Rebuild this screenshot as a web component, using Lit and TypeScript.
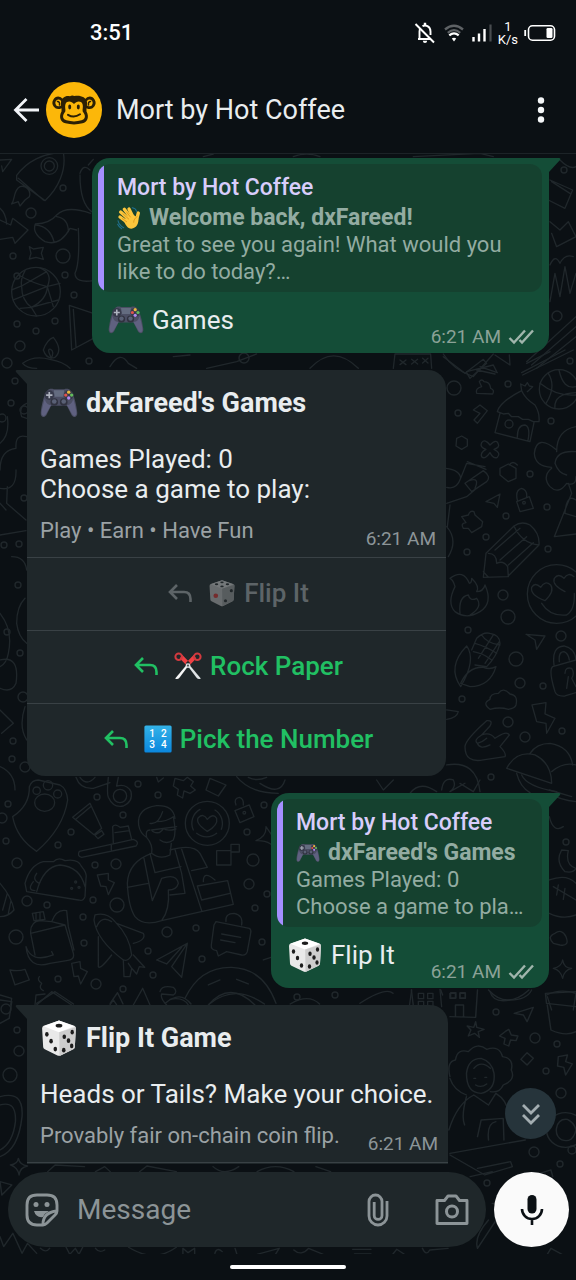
import { LitElement, html, svg, css } from "lit";
import { customElement, property } from "lit/decorators.js";

/* ---------- emoji ---------- */

const gamepad = html`<svg class="emoji" viewBox="0 0 36 36" aria-label="gamepad" role="img">
  <path d="M7 6.500 C8 4.500 11 4.200 13 5 H23 C25 4.200 28 4.500 29 6.500 C32 9 34.500 20 35.300 27 C35.800 31.500 32 32.500 30 29.500 L25.500 20.500 H10.500 L6 29.500 C4 32.500 .2 31.500 .7 27 C1.500 20 4 9 7 6.500Z" fill="#4b4e63"/>
  <path d="M4.500 14 C3 19 1.500 25 1.500 28 C2 31 4.500 31 6 28 L10.500 20 C7 20 5 17 4.500 14Z M31.500 14 C33 19 34.500 25 34.500 28 C34 31 31.500 31 30 28 L25.500 20 C29 20 31 17 31.500 14Z" fill="#5f6180"/>
  <path d="M13 6 H23 L22 12 H14Z" fill="#646c80"/>
  <circle cx="8.800" cy="10.500" r="4.600" fill="#373a4b"/><circle cx="27.200" cy="10.500" r="4.600" fill="#373a4b"/>
  <circle cx="13.500" cy="17" r="3.600" fill="#30323f"/><circle cx="22.500" cy="17" r="3.600" fill="#30323f"/>
  <circle cx="13.500" cy="16.600" r="2.200" fill="#596075"/><circle cx="22.500" cy="16.600" r="2.200" fill="#596075"/>
  <path d="M8.800 7.500 v6 M5.800 10.500 h6" stroke="#aeb3bf" stroke-width="1.600"/>
  <circle cx="27.200" cy="7.700" r="1.600" fill="#e9b93e"/><circle cx="24.400" cy="10.500" r="1.600" fill="#e0524d"/>
  <circle cx="30" cy="10.500" r="1.600" fill="#62bd5c"/><circle cx="27.200" cy="13.300" r="1.600" fill="#b18af0"/>
</svg>`;

const die = (dim = false) => html`<svg class="emoji" viewBox="0 0 36 36" aria-label="die" role="img">
  <path d="M18 1.500 L32.500 6.500 Q34 7.200 34 9 L33 26.500 Q33 28 31.500 28.700 L19.500 34.600 Q18 35.200 16.500 34.600 L4.500 28.700 Q3 28 3 26.500 L2 9 Q2 7.200 3.500 6.500Z" fill="${dim ? "#686c6e" : "#e9e9e9"}"/>
  <path d="M3.500 6.800 L18 1.500 L32.500 6.800 L18 12.500Z" fill="${dim ? "#74787a" : "#ffffff"}"/>
  <path d="M18.200 12.500 L34 7.500 L33 26.500 Q33 28 31.500 28.700 L18.500 35Z" fill="${dim ? "#575c5e" : "#cdcdcd"}"/>
  ${dim
    ? svg`<g fill="#22282b"><ellipse cx="11" cy="6.800" rx="2.200" ry="1.200"/><ellipse cx="18" cy="4.300" rx="2.200" ry="1.200"/><ellipse cx="25" cy="6.800" rx="2.200" ry="1.200"/><ellipse cx="18" cy="9.500" rx="2.200" ry="1.200"/><circle cx="30" cy="15" r="2"/><circle cx="22.500" cy="28" r="2"/></g><circle cx="10" cy="21.500" r="3" fill="#752c2d"/>`
    : svg`<g fill="#1c1c1c"><ellipse cx="18" cy="6.300" rx="3.200" ry="1.700"/><ellipse cx="6.500" cy="14.500" rx="1.700" ry="2.200"/><ellipse cx="10.500" cy="21" rx="1.700" ry="2.200"/><ellipse cx="14.500" cy="28.500" rx="1.700" ry="2.200"/><ellipse cx="23" cy="16.800" rx="1.700" ry="2.200"/><ellipse cx="30.500" cy="12.500" rx="1.600" ry="2.200"/><ellipse cx="27" cy="20.500" rx="1.700" ry="2.200"/><ellipse cx="22.500" cy="29.500" rx="1.700" ry="2.200"/><ellipse cx="30" cy="25.500" rx="1.600" ry="2.200"/></g>`}
</svg>`;

const wave = html`<svg class="emoji" viewBox="0 0 36 36" aria-label="waving hand" role="img">
  <g fill="none" stroke="#fcc63c" stroke-linecap="round" stroke-width="5"><path d="M19 21 L5.500 9"/><path d="M21 18 L11 5"/><path d="M24 17 L18 4.500"/><path d="M16 25 L4.500 16.500"/><path d="M29 22 L32 10.500"/></g>
  <path d="M10 21 L22 11 Q27 16 31.500 17 C34 25 29 34 21.500 34 C16 34 12 28 10 21Z" fill="#fcc63c"/>
  <path d="M8.500 11.500 L18 20 M14 8.500 L20.500 17 M7.500 18.500 L15 24 M31 15 C27 18 25 21 25 25" stroke="#d98e12" stroke-width="1.100" fill="none"/>
  <path d="M23 2.500 Q28 3 29.500 8 M1.500 22 Q3 29 10 32.500 M1 27.500 Q3 32 7 34" stroke="#20708f" stroke-width="1.600" fill="none" stroke-linecap="round"/>
</svg>`;

const scissors = html`<svg class="emoji" viewBox="0 0 36 36" aria-label="scissors" role="img">
  <path d="M15 14.500 L21 18 L34.500 34 Q31.500 36 29 33Z" fill="#dfe3e5"/>
  <path d="M21 14.500 L15 18 L1.500 34 Q4.500 36 7 33Z" fill="#f5f6f6"/>
  <path d="M7.500 8.500 L17.500 18.500 L21 14.500 L10.500 3.500Z M28.500 8.500 L18.500 18.500 L15 14.500 L25.500 3.500Z" fill="#ee4044"/>
  <circle cx="6" cy="6" r="4.200" fill="none" stroke="#d23a3f" stroke-width="2.600"/><circle cx="30" cy="6" r="4.200" fill="none" stroke="#d23a3f" stroke-width="2.600"/>
  <circle cx="18" cy="17.500" r="3" fill="#dfe3e5"/><circle cx="18" cy="17.500" r="1.400" fill="#50585c"/>
</svg>`;

const numbers = html`<svg class="emoji" viewBox="0 0 36 36" aria-label="input numbers" role="img">
  <defs><linearGradient id="tile" x1="0" y1="0" x2="0" y2="1"><stop offset="0" stop-color="#33b3e8"/><stop offset="1" stop-color="#0a86dd"/></linearGradient></defs>
  <rect x=".5" y=".5" width="35" height="35" rx="2" fill="url(#tile)"/>
  <g fill="#fff" font-family="Roboto, sans-serif" font-weight="500" font-size="13" text-anchor="middle"><text x="10.500" y="15.500">1</text><text x="25.500" y="15.500">2</text><text x="10.500" y="29.500">3</text><text x="25.500" y="29.500">4</text></g>
</svg>`;

/* ---------- interface icons ---------- */

const ticks = html`<svg class="ticks" viewBox="0 0 26 16" aria-label="delivered" role="img">
  <path d="M1.500 9 L6 13.500 L17 1.500 M11.500 11 L14 13.500 L25 1.500" fill="none" stroke="currentColor" stroke-width="2.400"/>
</svg>`;

const replyArrow = html`<svg class="reply" viewBox="0 0 24 20" aria-hidden="true">
  <path d="M9 2 L2 9 L9 16 M2 9 H16 Q22.500 9 22.500 16 V19" fill="none" stroke="currentColor" stroke-width="2.600"/>
</svg>`;

/* ---------- wallpaper doodles ---------- */

const dots: [number, number, number][] = [
  [17, 276, 3], [13, 256, 3], [31, 213, 5], [63, 188, 3], [63, 256, 7], [65, 275, 3], [74, 295, 3], [17, 324, 3], [36, 331, 3],
  [55, 321, 3], [20, 346, 5], [7, 363, 5], [89, 361, 3], [15, 381, 3], [11, 403, 3], [2, 418, 4], [24, 410, 4], [19, 544, 3],
  [4, 545, 3], [24, 498, 3], [18, 585, 3], [7, 632, 3], [20, 653, 3], [23, 697, 5], [13, 741, 3], [12, 759, 3], [25, 767, 5],
  [8, 804, 3], [2, 818, 5], [6, 841, 3], [17, 863, 5], [97, 797, 3], [158, 795, 3], [138, 784, 3], [123, 815, 3], [71, 832, 3],
  [58, 845, 3], [95, 865, 3], [116, 864, 5], [253, 860, 6], [249, 884, 5], [264, 805, 3], [247, 832, 3], [267, 894, 3],
  [255, 908, 3], [27, 901, 5], [47, 905, 3], [93, 900, 3], [117, 905, 7], [83, 917, 3], [16, 937, 7], [84, 943, 3],
  [167, 932, 5], [196, 928, 3], [148, 951, 3], [202, 959, 3], [153, 975, 3], [58, 979, 3], [96, 984, 5], [123, 989, 3],
  [262, 942, 3], [454, 388, 7], [508, 384, 3], [458, 413, 3], [551, 421, 3], [570, 361, 3], [530, 474, 3], [506, 516, 3],
  [547, 507, 3], [486, 537, 3], [467, 552, 3], [548, 549, 3], [503, 595, 5], [508, 617, 7], [468, 630, 3], [561, 636, 5],
  [516, 659, 7], [520, 683, 5], [543, 686, 3], [462, 699, 3], [508, 722, 5], [525, 737, 5], [562, 731, 3], [491, 777, 3],
  [564, 170, 3], [557, 316, 5], [244, 358, 5], [566, 842, 3], [496, 1012, 3], [535, 1038, 5],
  [557, 1044, 3], [546, 1071, 3], [561, 1093, 5], [534, 1152, 5], [560, 1164, 3], [487, 1183, 3], [17, 1030, 3],
  [19, 1051, 5], [10, 1075, 7], [6, 1009, 5], [297, 997, 3], [335, 995, 3], [530, 1182, 5], [572, 1150, 4],
];

const wallpaper = svg`
  <g fill="none" stroke="#20272b" stroke-width="1.400" stroke-linejoin="round" stroke-linecap="round">
    ${dots.map(([x, y, r]) => svg`<circle cx=${x} cy=${y} r=${r}/>`)}

    <g transform="translate(0 150) scale(.3333)" stroke-width="4">
      <path d="M50 76 C80 35 130 8 190 8 C200 60 175 115 135 152 L50 90Z M55 85 L130 150 M60 110 C40 120 45 150 35 162 L55 155 L60 168 L75 150 L88 140 C95 120 75 105 60 110Z"/>
      <circle cx="148" cy="48" r="25"/><circle cx="148" cy="48" r="15"/>
      <path d="M0 30 L35 28 L8 65 L5 48 M0 210 L32 225 L38 205 L84 240 L45 280 L38 262 L0 268 M0 175 Q18 190 20 222"/>
      <path d="M106 222 Q150 220 170 195 Q200 165 272 190 M106 222 Q95 250 135 275 Q180 290 210 235 L230 240 M108 225 Q150 230 162 275 M170 200 Q205 205 205 245"/>
      <path d="M88 290 L100 297 L130 292 L124 310 L130 328 L108 322 L88 327 L93 310Z"/>
      <circle cx="108" cy="425" r="73"/><path d="M55 375 Q100 400 142 410 Q160 370 120 354 M75 362 Q60 390 65 410 Q65 450 94 472 Q140 450 142 410 M35 420 L65 408 L140 365 M40 450 L140 410 L180 400 M94 472 L175 450 M60 475 L94 472 L110 498 M142 410 L160 470"/>
      <path d="M208 466 L280 490 M208 466 L215 600 L290 560 M220 478 L228 590 M235 235 Q240 340 225 370 Q225 400 280 392 M240 75 Q240 160 275 185 M240 70 Q250 40 270 60 M265 45 L280 28"/>
      <path d="M130 600 Q140 570 160 562 Q190 600 165 622 Q140 630 130 600Z M152 620 Q140 595 152 598 Q165 605 152 628 M68 640 Q100 615 150 628 Q190 635 210 655 M68 640 Q80 655 110 655"/>
    </g>

    <g transform="translate(0 360) scale(.3333)" stroke-width="4">
      <path d="M0 250 Q30 225 22 170 M80 230 Q45 220 48 265 Q0 270 0 330 M0 385 Q50 395 48 330 M22 380 L20 430 L78 480 M0 430 L18 450 M0 525 L78 512 M80 130 Q55 140 65 170 L80 175"/>
      <path d="M0 760 Q40 810 25 880 Q20 910 0 920 M75 715 Q50 740 50 790 Q55 830 80 850 M35 590 Q75 590 80 630 M0 900 Q60 885 48 970 Q35 1000 0 985 M0 1050 L40 1090 L5 1120 M75 1040 Q55 1100 80 1140 M0 1220 Q45 1240 45 1290"/>
    </g>

    <g transform="translate(0 750) scale(.3333)" stroke-width="4">
      <path d="M38 200 Q90 165 88 110 Q95 90 115 90 L180 105 Q200 115 203 150 Q190 235 110 304 Q50 265 38 200Z"/>
      <ellipse cx="134" cy="158" rx="30" ry="26"/><circle cx="110" cy="122" r="11"/><circle cx="144" cy="106" r="14"/><circle cx="173" cy="132" r="12"/>
      <path d="M218 202 L270 160 L305 235 L282 254Z M228 207 L272 170 M285 256 L305 242 L312 253 L294 266Z"/>
      <path d="M238 304 L400 268 Q420 275 408 288 L245 322 Q230 318 238 304Z M340 280 L338 230 Q345 220 360 232 L385 228 L395 268 M345 248 L388 242 M334 285 V300"/>
      <path d="M228 82 Q240 118 280 115 L330 98 M240 82 Q260 110 285 82 M325 82 Q320 130 325 142 Q340 175 370 168 Q400 155 393 125 Q380 100 350 108 L355 82"/><circle cx="360" cy="138" r="20"/>
      <path d="M525 85 L550 92 L562 82 L580 95 L572 108 L586 120 L570 130 L552 123 L548 144 L532 135 L535 118 L520 108Z M630 85 L678 105 L655 138 L618 120Z M470 82 L475 96 L490 84 M710 80 Q750 130 835 130 M745 82 Q770 95 800 82"/>
      <circle cx="622" cy="220" r="66"/><path d="M622 244 Q585 220 595 203 Q610 188 622 208 Q640 188 650 205 Q655 225 622 244Z M580 240 A48 48 0 0 1 600 178 M645 180 A48 48 0 0 1 664 238 M650 250 A48 48 0 0 1 590 250"/>
      <path d="M705 182 L748 165 L762 200 L720 218Z M708 165 Q700 145 718 142 Q732 145 730 165"/><circle cx="733" cy="188" r="4"/>
      <path d="M830 310 Q820 270 768 272 Q800 260 798 230 L815 255 M650 302 H693 V345 H650Z M693 283 H718 V306 H693Z"/>
      <path d="M525 205 Q520 165 470 167 Q410 175 416 225 Q420 250 440 262 M440 262 Q435 240 450 240 M450 220 Q475 225 488 185 M470 215 Q500 215 520 200 Q530 250 520 270 Q500 285 480 270 M455 240 L530 230 M455 240 Q460 250 478 248 Q490 240 490 235 Q500 245 528 237 M440 262 Q460 285 455 310 Q480 330 510 315 L514 280"/>
      <path d="M455 310 Q385 335 382 400 Q385 470 405 500 Q430 530 485 512 L700 463 L683 392 L592 408 M510 300 Q580 280 600 310 L622 352 L575 362 M432 325 L457 452 Q480 400 485 385 M382 412 L445 400 M450 310 L465 368 L490 362 M525 298 L545 370 L555 430 L510 435 M545 298 L605 482 M490 362 L543 350 M485 385 Q530 370 535 400 Q530 420 505 420 Q510 480 485 512 M592 408 L605 450 L690 430 M610 395 Q610 360 645 390"/>
      <path d="M75 400 Q90 345 130 335 L160 335 Q175 320 195 332 Q235 325 245 350 Q262 370 258 385 L255 440 Q250 455 235 450 L80 425Z M110 425 Q130 350 180 345 Q240 350 255 410 M100 395 Q80 420 105 422 M110 370 Q95 390 118 400"/><circle cx="227" cy="396" r="3"/><circle cx="215" cy="415" r="3"/><circle cx="237" cy="412" r="3"/>
      <path d="M292 375 L325 370 L325 390 L343 398 L325 434 L318 410 L302 408Z M215 640 L240 635 L242 655 L262 665 L242 702 L235 678 L222 680Z M30 660 Q55 665 75 658 L88 690 L45 705Z M118 680 Q110 690 125 700 Q115 715 130 722"/>
      <path d="M92 550 Q90 515 120 512 L155 515 L195 525 L220 610 Q225 630 200 632 L150 640 Q85 660 78 590 Q95 640 160 615 L155 605 M92 550 L195 525 M92 550 L105 615 M97 490 L130 485 L135 508 L102 512Z M108 488 V508 M120 486 V508 M155 515 Q170 475 200 482 L205 530 L222 600 M0 400 Q35 440 42 480 Q25 500 0 500 M8 480 L22 430 M25 490 L33 452"/>
      <path d="M285 495 Q320 485 345 515 Q390 560 395 615 Q385 635 370 630 Q290 570 282 510Z M290 530 Q305 495 335 515 M350 520 L430 550 Q440 570 400 580 M295 560 V650 Q300 660 335 615 M370 630 L372 680 L390 680 L395 655 L410 672 L418 650 L434 652 L400 615 M385 640 L395 655"/>
      <path d="M470 630 L562 580 L545 682 L515 650 L562 580 M470 630 L500 642 L545 592"/>
      <path d="M648 515 L748 535 Q755 540 752 550 L742 605 Q738 617 725 615 L680 605 L655 618 L650 602 Q632 600 634 585 L642 525Z M665 552 L722 562 M662 570 L705 578 M678 515 Q675 490 702 490 Q730 495 725 525"/>
      <path d="M555 745 Q600 650 695 652 Q790 655 828 760 M625 765 Q690 690 765 765 M625 705 L660 690 M710 688 L745 702 M565 765 Q550 740 510 748 M480 725 Q485 705 520 712 Q535 725 520 735 L485 732 Q480 745 500 765 M105 765 L108 735 L135 732 M110 765 L155 725 L215 765 M400 765 L428 715 L450 765 M330 765 L340 750 L350 765 M0 735 L35 745 L32 765 M790 630 L820 620"/>
    </g>

    <g transform="translate(440 350) scale(.3333)" stroke-width="4">
      <path d="M10 20 L75 70 L130 28 L140 40 L90 85 L80 68 M110 60 L165 72 M120 50 L172 68 M165 15 L210 45 L208 15 M245 68 L375 0 M260 40 L330 5 M248 75 L400 0"/>
      <circle cx="357" cy="118" r="59"/><path d="M300 100 Q350 140 408 135 M325 70 Q350 110 318 160 M357 60 Q370 120 408 110 M345 176 Q340 130 408 128"/>
      <path d="M110 130 Q105 115 125 110 L118 95 Q125 85 132 95 Q150 95 152 115 Q165 120 158 132Z M100 180 L120 165 L142 182 L112 220 L102 210 L120 190Z"/>
      <path d="M172 185 Q180 155 245 122 Q255 145 285 165 Q300 190 297 215 L280 215 L265 208 L248 208 L235 200 L215 200 L205 190 L190 192Z M180 190 L165 248 L270 275 L282 218 M245 122 L242 102 L255 108 L262 98 L268 108 L278 110 L262 125 M232 262 Q232 225 255 225 Q272 230 264 272"/><circle cx="207" cy="222" r="12"/>
      <path d="M50 265 L65 258 L82 268 L82 288 L65 298 L48 288Z M125 278 Q135 265 150 285 Q170 265 175 282 Q180 292 162 298 Q185 310 172 322 Q160 328 150 308 Q135 330 125 320 Q120 308 138 298 Q118 292 125 278Z"/>
      <path d="M180 355 L205 342 L228 355 L228 385 L205 395 L180 375Z M208 345 Q218 330 232 345 M230 455 L268 440 L280 475 L240 485Z M232 450 Q225 420 245 415 Q262 420 260 440 M138 455 L180 432 L172 472 L162 460Z"/><circle cx="252" cy="458" r="4"/>
      <path d="M350 305 Q350 240 408 230 M350 300 Q290 250 283 310 Q285 350 335 352 M335 355 Q305 380 330 410 Q355 435 380 400 Q408 410 408 380 M345 340 Q350 300 408 305 M345 340 Q355 370 380 375 M385 400 L395 430 L343 560 L408 552 M375 490 Q380 430 408 450 M375 490 L408 500"/>
      <path d="M18 355 Q60 360 62 385 Q50 420 20 412 M62 385 L80 340 L135 350 M82 335 L138 358 M75 400 L130 362 Q155 380 140 395 L95 425Z M88 392 Q120 380 105 415 M20 460 L80 440 L110 415 M30 465 L22 530 M20 530 Q55 570 25 620"/>
      <path d="M65 500 L85 495 Q90 480 102 485 L105 495 L128 515 L125 530 L95 548 L85 535 L70 535 Q60 520 78 518Z"/>
      <path d="M130 682 L138 610 L222 528 Q245 512 270 525 Q300 550 297 585 L203 680Z M145 610 Q170 610 170 640 Q190 630 203 650 L205 680 M222 528 Q245 580 297 585 M165 600 L240 535 M180 630 L260 560 M130 665 L145 682 M205 645 L280 578"/>
      <path d="M30 685 Q70 655 88 700 Q95 700 95 685 Q120 710 110 725 Q130 725 135 705 Q160 760 120 785 Q80 810 45 785 Q20 760 45 710 Q40 690 30 685Z M60 790 Q55 740 85 735 Q90 755 110 745 Q130 770 90 795"/>
      <circle cx="350" cy="732" r="88"/><path d="M315 752 Q270 735 275 712 Q285 695 302 712 Q315 690 332 705 Q345 725 315 752Z M375 725 Q335 705 343 685 Q355 668 372 685 Q385 665 402 680 M305 760 Q330 800 380 795 Q405 780 403 730"/>
      <path d="M62 1010 Q20 950 80 888 Q110 930 62 1010Z M62 1000 Q85 950 130 952 Q150 960 168 950 Q150 1010 90 1010Z M95 900 L110 865 Q130 845 150 850 Q180 855 180 880 Q170 920 140 950 L105 945 M105 880 Q140 890 170 910 M100 905 Q130 910 155 930 M125 855 Q140 880 180 885 M115 925 L160 855 M135 940 L178 875"/>
      <path d="M258 853 L315 858 L290 898 L285 870Z M338 950 L408 930 M338 950 Q325 960 345 1025 Q350 1040 375 1038 L408 1028 M342 945 Q335 890 372 888 Q405 895 408 930 M358 935 Q355 905 372 905 Q385 910 388 930 M375 970 Q375 950 395 955 Q405 970 395 985 L408 1010 M380 1015 L385 980"/>
      <path d="M150 1078 Q125 1060 150 1048 Q150 1030 175 1030 Q190 1010 210 1032 Q235 1035 228 1065 Q225 1075 205 1078 Q180 1070 150 1078Z M276 1065 L318 1058 L315 1092 L345 1105 L320 1150 L318 1120 L290 1115Z M20 1080 L55 1085 Q50 1105 20 1108"/>
      <path d="M75 1190 Q75 1170 140 1112 Q160 1110 150 1128 L125 1155 Q150 1145 165 1165 Q200 1140 208 1155 L180 1190 Q200 1210 195 1220 L130 1230 Q75 1240 75 1190Z M125 1155 Q100 1170 112 1180 Q130 1175 140 1165 M112 1180 Q120 1200 150 1185 M20 1245 Q110 1230 120 1325 M5 1320 Q10 1280 40 1290 Q50 1310 30 1325 L75 1300"/>
      <path d="M200 1255 Q230 1200 285 1215 Q335 1240 335 1300 Z M270 1210 Q290 1180 330 1180 Q390 1190 398 1245 M335 1265 Q370 1235 408 1245 M230 1270 Q240 1310 270 1328 M245 1275 Q260 1310 350 1325"/>
    </g>

    <g transform="translate(80 150) scale(.3333)" stroke-width="4">
      <path d="M1410 90 L1478 120 L1455 175 L1405 150 M1415 95 L1470 130 M1440 30 Q1470 60 1488 50 M1410 215 L1440 240 L1465 215 L1488 260 L1430 290 L1415 250 M1410 345 Q1425 310 1440 340 Q1455 310 1480 320 M1410 455 L1425 370 L1440 440 L1455 350 L1470 430 L1488 370 M1340 635 L1488 500 M1355 645 L1488 530 M1370 655 L1488 560"/>
      <path d="M280 620 L330 615 M380 655 L470 635 L530 612 M690 655 Q760 580 835 655 M940 655 L945 612 H1052 L1055 655 M1090 612 Q1120 660 1180 680 L1240 612 M1160 665 L1240 645 L1250 665 M90 650 Q120 600 145 640 L170 655"/>
      <path d="M960 630 l18 14 m0 -14 l-18 14 M995 628 l18 14 m0 -14 l-18 14 M1028 625 l16 14 m0 -14 l-16 14 M370 20 L400 12 M640 20 Q680 5 720 20 M1000 20 L1200 10 L1240 20"/>
    </g>

    <g transform="translate(260 780) scale(.3333)" stroke-width="4">
      <path d="M868 30 L935 50 M870 40 Q900 60 948 65 M868 110 Q880 160 910 140 M905 210 Q885 245 915 275 Q940 280 948 265 Q915 255 925 212Z M868 300 Q920 280 948 310 M868 400 Q910 420 948 405 M880 320 L948 360 M895 315 L890 345 M915 325 L910 358 M880 490 Q860 470 885 460 Q905 445 918 470 Q930 500 900 495Z M908 540 Q912 565 935 565 Q912 570 908 595 Q902 570 880 565 Q905 560 908 540Z M860 645 Q900 625 948 640 L940 690 M862 650 L875 690"/>
      <path d="M455 630 L448 680 M540 628 L545 680 M475 640 h16 v16 h-16Z M503 640 h16 v16 h-16Z M475 664 h16 v16 h-16Z M503 664 h16 v16 h-16Z M572 638 h16 v16 h-16Z M600 638 h16 v16 h-16Z M690 635 Q700 670 750 660 Q800 660 815 630 M0 10 Q60 50 75 0 M350 0 L370 30 L400 0 M450 40 Q480 0 530 35 M600 10 L640 35 L660 0"/>
    </g>

    <g transform="translate(0 990) scale(.3673 .3333)" stroke-width="4">
      <path d="M1120 0 L1125 45 M1200 0 L1205 15 M1300 0 L1295 82 L1225 80 M1225 10 h15 v15 h-15Z M1252 10 h15 v15 h-15Z M1240 80 V45 H1262 V80 M1330 0 Q1380 60 1440 0 M1485 10 L1568 5 M1485 10 L1488 40 L1568 50 M1490 45 L1500 120 Q1540 140 1568 125 M1400 70 L1452 52 L1435 95 L1425 75Z"/>
      <path d="M1295 95 L1298 112 L1318 118 L1302 125 L1305 142 L1292 130 L1275 138 L1282 120 L1272 108 L1290 112Z M1375 125 L1385 118 L1392 135 L1410 138 L1405 152 L1390 150 L1385 168 L1372 162 L1375 145 L1360 138Z M1435 188 L1452 205 L1435 225 L1418 208Z M1520 200 L1545 195 L1540 215 L1558 222 L1540 255 L1535 232 L1518 228Z"/>
      <path d="M1225 260 Q1215 215 1240 210 Q1245 175 1275 185 Q1300 155 1325 178 Q1360 165 1368 200 Q1400 205 1392 240 Q1405 270 1370 285 Q1360 310 1335 305 M1270 250 Q1275 205 1310 205 Q1340 215 1345 250 Q1350 300 1310 310 Q1270 310 1270 250Z M1290 235 Q1310 210 1335 235 M1290 265 h5 M1320 262 h5 M1295 285 Q1310 295 1325 282 M1225 265 Q1235 300 1270 315"/>
      <path d="M1222 420 Q1245 340 1290 315 L1330 345 L1350 310 Q1380 330 1385 370 M1270 320 Q1255 380 1265 405 M1300 440 L1310 390 L1370 385 L1372 450 M1225 490 L1430 450 M1330 450 Q1325 400 1350 395 M1225 495 L1320 555 L1395 530 L1390 515 L1300 535 M1280 560 L1340 545"/>
      <circle cx="1540" cy="420" r="52"/><path d="M1515 415 Q1520 385 1545 388 Q1565 400 1568 420 Q1560 460 1530 450 Q1512 440 1515 415Z"/>
      <path d="M0 30 L32 35 L25 85 L0 100 M0 320 Q65 300 60 380 Q50 480 0 500 M0 345 Q45 330 42 395 Q35 460 0 480 M50 505 Q54 525 75 528 Q54 532 52 555 Q48 532 28 525 Q48 522 50 505Z M0 575 L32 585 L5 615Z"/>
      <path d="M100 40 L150 5 L200 42 M300 40 L320 8 L335 42 M450 40 Q490 0 520 42 M570 42 Q640 -20 720 42 M790 42 Q840 10 870 42 M980 40 Q1050 -10 1070 10 M130 545 L150 525 L230 530 M260 545 L285 530 L300 545 M380 545 L400 528 L480 545 M580 530 Q610 560 650 530 M700 545 Q750 515 800 545 M860 530 L900 545"/>
      <path d="M0 740 L10 770 L35 730 L60 790 L75 760 L100 790 M110 775 Q125 790 135 775 M180 772 L190 793 L205 775 L215 793 L225 772 M260 775 Q270 790 285 780 M350 772 Q420 820 480 772 M498 793 V775 L512 788 L530 775 V793 M585 790 Q590 770 605 785 M640 775 L645 793 M700 793 L760 775 L750 793 M800 780 Q820 800 840 775 L880 793 M960 778 H1010 M965 792 H1010 M1070 792 L1080 778 L1100 792 M1150 775 Q1160 800 1170 780 L1220 775 M1300 775 L1375 650 L1340 640 M1330 690 Q1290 740 1300 775 M1490 793 L1500 775 L1530 793 M1470 550 L1500 540 L1505 560"/>
    </g>
  </g>`;

/* ---------- message bubble ---------- */

@customElement("chat-bubble")
class ChatBubble extends LitElement {
  @property() side: "in" | "out" = "in";

  static styles = css`
    :host { display: flex; }
    .bubble { position: relative; box-sizing: border-box; min-width: 0; color: #e9edef; font-size: 26px; line-height: 30px; }
    .in { background: #1f272a; border-radius: 0 18px 18px 18px; min-width: min(419px, 100%); }
    .out { background: #144d37; border-radius: 18px 0 18px 18px; margin-left: auto; max-width: 457px; padding: 6px 7px 0 6px; }
    .tail { position: absolute; top: 0; width: 12px; height: 14px; }
    .in .tail { right: 100%; color: #1f272a; }
    .out .tail { left: 100%; color: #144d37; }
  `;

  render() {
    const out = this.side === "out";
    return html`<article class="bubble ${this.side}">
      <svg class="tail" viewBox="0 0 12 14" aria-hidden="true">
        <path d=${out ? "M0 0 H10 Q12 0 11 2 L0 14Z" : "M12 0 H2 Q0 0 1 2 L12 14Z"} fill="currentColor"/>
      </svg>
      <slot></slot>
    </article>`;
  }
}

@customElement("app-root")
class AppRoot extends LitElement {
  static styles = css`
    :host { display: flex; flex-direction: column; height: 100vh; overflow: hidden; background: #0b1014; color: #e9edef; font-family: Roboto, "Noto Sans", sans-serif; }
    * { box-sizing: border-box; }
    svg { display: block; flex: none; }
    button, input { margin: 0; padding: 0; border: 0; background: none; color: inherit; font: inherit; }
    p, h1, h2 { margin: 0; font: inherit; }

    .status { display: flex; align-items: center; justify-content: space-between; height: 66px; padding: 0 20px 0 90px; color: #fff; }
    .clock { font-size: 22px; line-height: 28px; font-weight: 500; }
    .indicators { display: flex; align-items: center; gap: 6px; }
    .speed { display: flex; flex-direction: column; align-items: center; font-size: 13px; line-height: 13px; }

    .header { display: flex; align-items: center; height: 88px; padding: 0 27px 0 13px; border-bottom: 1px solid #1c2327; }
    .avatar { margin-left: 6px; }
    .name { flex: 1; margin-left: 14px; font-size: 27px; line-height: 32px; }

    .chat { flex: 1; min-height: 0; display: grid; grid-template: minmax(0, 1fr) / minmax(0, 1fr); }
    .wallpaper, .content { grid-area: 1 / 1; width: 100%; height: 100%; min-height: 0; }
    .content { display: flex; flex-direction: column; z-index: 1; }
    .stream { position: relative; flex: 1; min-height: 0; overflow: hidden; display: flex; flex-direction: column; gap: 17px; padding: 4px 27px 0; }
    chat-bubble { flex: none; }

    .line { display: flex; align-items: center; gap: 8px; }
    .emoji { width: 36px; height: 36px; margin: -4px 0; }
    .quote { border-radius: 12px; background: linear-gradient(90deg, #a58fff 6px, #15412f 6px); padding: 8px 17px 7px 19px; color: #93aca2; font-size: 22px; line-height: 27px; }
    .quote .emoji { width: 24px; height: 24px; }
    .author { color: #d8cdfb; font-size: 23px; line-height: 32px; font-weight: 500; }
    .strong { font-size: 23px; font-weight: 700; }
    .said { display: flex; align-items: flex-end; justify-content: space-between; gap: 36px; padding: 13px 8px 4px 10px; }
    .said p { margin-bottom: 14px; }
    .time { display: flex; align-items: center; gap: 7px; color: #8c9598; font-size: 19px; line-height: 24px; white-space: nowrap; }
    .out-time { color: #8ba297; }
    .ticks { width: 26px; height: 16px; color: #a0b5ac; }

    .card { padding: 18px 10px 6px 13px; }
    .card h2 { font-size: 27px; font-weight: 700; margin-bottom: 26px; }
    .card .emoji { width: 38px; height: 38px; }
    .foot { display: flex; justify-content: space-between; align-items: flex-start; gap: 28px; margin-top: 14px; color: #9ba2a5; font-size: 22px; line-height: 26px; }
    .foot .time { margin-top: 9px; }
    .choice { display: flex; align-items: center; justify-content: center; gap: 8px; width: 100%; height: 73px; padding: 0 0 2px 4px; border-top: 1px solid #394145; color: #21c063; font-size: 26px; line-height: 30px; font-weight: 500; }
    .choice .emoji { width: 28px; height: 28px; margin-left: 8px; }
    .choice:disabled { color: #5d6467; }
    .reply { width: 24px; height: 20px; }
    .more { height: 40px; border-top: 1px solid #394145; }

    .jump { position: absolute; right: 20px; bottom: 25px; display: grid; place-items: center; width: 51px; height: 51px; border-radius: 50%; background: #26343b; color: #a3adb1; }

    .composer { display: flex; align-items: center; gap: 8px; padding: 8px 7px 7px 8px; }
    .pill { flex: 1; min-width: 0; display: flex; align-items: center; height: 75px; padding: 0 17px; border-radius: 38px; background: #1f272a; color: #8c9497; }
    .field { flex: 1; min-width: 0; margin-left: 18px; font-size: 28px; line-height: 34px; outline: none; color: #e9edef; }
    .field::placeholder { color: #8c9497; opacity: 1; }
    .camera { margin-left: 46px; }
    .mic { display: grid; place-items: center; width: 75px; height: 75px; border-radius: 50%; background: #fafafa; color: #0b1014; }
    .home { display: flex; justify-content: center; align-items: center; height: 26px; }
    .home span { width: 116px; height: 4px; border-radius: 2px; background: #fff; }
  `;

  private said(label: string, emoji: unknown) {
    return html`<div class="said"><p class="line">${emoji}<span>${label}</span></p><span class="time out-time">6:21 AM ${ticks}</span></div>`;
  }

  private choice(label: string, emoji: unknown, disabled = false) {
    return html`<button class="choice" ?disabled=${disabled}>${replyArrow}${emoji}<span>${label}</span></button>`;
  }

  private card(title: string, emoji: unknown, lines: string[], foot: string) {
    return html`<div class="card">
      <h2 class="line">${emoji}<span>${title}</span></h2>
      ${lines.map((line) => html`<p>${line}</p>`)}
      <div class="foot"><span>${foot}</span><span class="time">6:21 AM</span></div>
    </div>`;
  }

  render() {
    return html`
      <div class="status">
        <span class="clock">3:51</span>
        <div class="indicators">
          <svg width="22" height="22" viewBox="0 0 22 22" aria-label="silent" role="img">
            <path d="M1.500 2 L20 20.500" stroke="#fff" stroke-width="1.900"/>
            <path d="M4 17 H16 M5.500 16.500 V9.500 Q5.500 7.500 6.500 6.500 M8.500 4.200 Q11 2.800 13.500 4.200 Q16.500 5.800 16.500 9.500 V13" fill="none" stroke="#fff" stroke-width="1.900"/>
            <path d="M9.800 .8 h2.400 v3 h-2.400Z M8.800 18.800 h4.400 Q13 21 11 21 Q9 21 8.800 18.800Z" fill="#fff"/>
          </svg>
          <svg width="24" height="20" viewBox="0 0 24 20" aria-label="wifi" role="img">
            <path d="M3 6.500 Q12 -1 21 6.500 M5.800 9.800 Q12 4.500 18.200 9.800" fill="none" stroke="#5e6265" stroke-width="2.300"/>
            <path d="M7.300 12.300 Q12 8.500 16.700 12.300" fill="none" stroke="#fff" stroke-width="2.300"/><path d="M9.800 15.500 Q12 13.800 14.200 15.500 L12 18.500Z" fill="#fff"/>
          </svg>
          <svg width="20" height="18" viewBox="0 0 20 18" aria-label="signal" role="img">
            <path d="M1.500 13 V17.500 M7 9.500 V17.500 M12.500 5 V17.500" stroke="#fff" stroke-width="2.400"/><path d="M18.500 .5 V17.500" stroke="#484c4f" stroke-width="2.200"/>
          </svg>
          <span class="speed"><span>1</span><span>K/s</span></span>
          <svg width="32" height="18" viewBox="0 0 32 18" aria-label="battery" role="img">
            <path d="M1.200 6 V12" stroke="#fff" stroke-width="1.800"/><rect x="4.500" y="1.800" width="26" height="14.400" rx="4" fill="none" stroke="#fff" stroke-width="1.600"/><rect x="22.500" y="4" width="6" height="10" rx="1.200" fill="#fff"/>
          </svg>
        </div>
      </div>

      <header class="header">
        <button aria-label="Back"><svg width="27" height="26" viewBox="0 0 27 26"><path d="M13.500 2 L2.500 13 L13.500 24 M2.500 13 H26" fill="none" stroke="#f1f4f8" stroke-width="2.800"/></svg></button>
        <svg class="avatar" width="56" height="56" viewBox="0 0 56 56" aria-label="Mort" role="img">
          <circle cx="28" cy="28" r="28" fill="#fcb709"/>
          <path d="M15 25 C9.500 27.500 6.500 22 8.500 18.500 C10.500 15 14 15.500 16 18 M41 25 C46.500 27.500 49.500 22 47.500 18.500 C45.500 15 42 15.500 40 18" fill="none" stroke="#2b2005" stroke-width="2.800" stroke-linecap="round"/>
          <path d="M11.500 19.500 Q14 19.500 13.500 23 M44.500 19.500 Q42 19.500 42.500 23" fill="none" stroke="#2b2005" stroke-width="1.500" stroke-linecap="round"/>
          <path fill-rule="evenodd" fill="#2b2005" d="M15 20 C15.500 15.500 20 13 24 14.200 Q26 12.800 28.500 14 C34 12.800 40 15 41 20 C41.500 24 40 27 40.500 29.500 C43.500 35 41.500 40 36.500 41.300 Q28 43.500 19.500 41.300 C14.500 40 12.500 35 15.500 29.500 C16 27 14.500 24 15 20Z M19.500 22 C18.500 25 19.800 27 19.300 29.500 C15.500 34 17 37.500 20.500 38.300 Q28 40.500 35.500 38.300 C39 37.500 40.500 34 36.700 29.500 C36.200 27 37.500 25 36.500 22 C35 18.500 30.500 19 28 22 C25.500 19 21 18.500 19.500 22Z"/>
          <path d="M22 32.800 Q28 36.500 34 32.300" fill="none" stroke="#2b2005" stroke-width="2" stroke-linecap="round"/>
          <ellipse cx="23.700" cy="25" rx="1.500" ry="2.400" fill="#2b2005"/><ellipse cx="32.300" cy="25" rx="1.500" ry="2.400" fill="#2b2005"/>
        </svg>
        <h1 class="name">Mort by Hot Coffee</h1>
        <button aria-label="Menu"><svg width="16" height="28" viewBox="0 0 16 28" fill="#f4f6f8"><circle cx="8" cy="4.500" r="3.200"/><circle cx="8" cy="14" r="3.200"/><circle cx="8" cy="23.500" r="3.200"/></svg></button>
      </header>

      <main class="chat">
        <svg class="wallpaper" viewBox="0 154 576 1100" preserveAspectRatio="xMinYMin slice" aria-hidden="true">${wallpaper}</svg>
        <div class="content">
          <div class="stream">
            <chat-bubble side="out">
              <div class="quote">
                <p class="author">Mort by Hot Coffee</p>
                <p class="strong line">${wave}<span>Welcome back, dxFareed!</span></p>
                <p>Great to see you again! What would you like to do today?…</p>
              </div>
              ${this.said("Games", gamepad)}
            </chat-bubble>

            <chat-bubble side="in">
              ${this.card("dxFareed's Games", gamepad, ["Games Played: 0", "Choose a game to play:"], "Play • Earn • Have Fun")}
              ${this.choice("Flip It", die(true), true)}
              ${this.choice("Rock Paper", scissors)}
              ${this.choice("Pick the Number", numbers)}
            </chat-bubble>

            <chat-bubble side="out">
              <div class="quote">
                <p class="author">Mort by Hot Coffee</p>
                <p class="strong line">${gamepad}<span>dxFareed's Games</span></p>
                <p>Games Played: 0</p>
                <p>Choose a game to pla…</p>
              </div>
              ${this.said("Flip It", die())}
            </chat-bubble>

            <chat-bubble side="in">
              ${this.card("Flip It Game", die(), ["Heads or Tails? Make your choice."], "Provably fair on-chain coin flip.")}
              <div class="more"></div>
            </chat-bubble>

            <button class="jump" aria-label="Scroll to latest"><svg width="20" height="24" viewBox="0 0 20 24"><path d="M2 3 L10 11 L18 3 M2 13 L10 21 L18 13" fill="none" stroke="currentColor" stroke-width="2.800"/></svg></button>
          </div>

          <form class="composer">
            <div class="pill">
              <button type="button" aria-label="Stickers"><svg width="34" height="34" viewBox="0 0 34 34"><path d="M32 18 V12 Q32 2 22 2 H12 Q2 2 2 12 V22 Q2 32 12 32 H18 Q20 32 22 30 L30 22 Q32 20 32 18Z M18 31 Q18 20 31 18" fill="none" stroke="currentColor" stroke-width="2.900" stroke-linejoin="round"/><circle cx="11" cy="11.500" r="2.500" fill="currentColor"/><circle cx="22" cy="11.500" r="2.500" fill="currentColor"/><path d="M9 18 H24 Q20 20 18 24 Q11 25 9 18Z" fill="currentColor"/></svg></button>
              <input class="field" type="text" placeholder="Message" aria-label="Message">
              <button type="button" aria-label="Attach"><svg width="22" height="34" viewBox="0 0 22 34"><path d="M20 8 V23 A9 9 0 0 1 2 23 V8.500 A6.500 6.500 0 0 1 15 8.500 V22.500 A3.900 3.900 0 0 1 7.200 22.500 V9" fill="none" stroke="currentColor" stroke-width="2.800"/></svg></button>
              <button type="button" class="camera" aria-label="Camera"><svg width="34" height="32" viewBox="0 0 34 32"><path d="M2 6.500 H9.500 L13 2 H21 L24.500 6.500 H32 V29.500 H2Z" fill="none" stroke="currentColor" stroke-width="2.900" stroke-linejoin="round"/><circle cx="17" cy="17.500" r="5.500" fill="none" stroke="currentColor" stroke-width="3"/></svg></button>
            </div>
            <button type="button" class="mic" aria-label="Record voice message"><svg width="24" height="32" viewBox="0 0 24 32"><rect x="7.500" y="1" width="9" height="18.500" rx="4.500" fill="currentColor"/><path d="M2 15 A10 10 0 0 0 22 15 M12 25 V31" fill="none" stroke="currentColor" stroke-width="2.600"/></svg></button>
          </form>
        </div>
      </main>
      <div class="home"><span></span></div>
    `;
  }
}
